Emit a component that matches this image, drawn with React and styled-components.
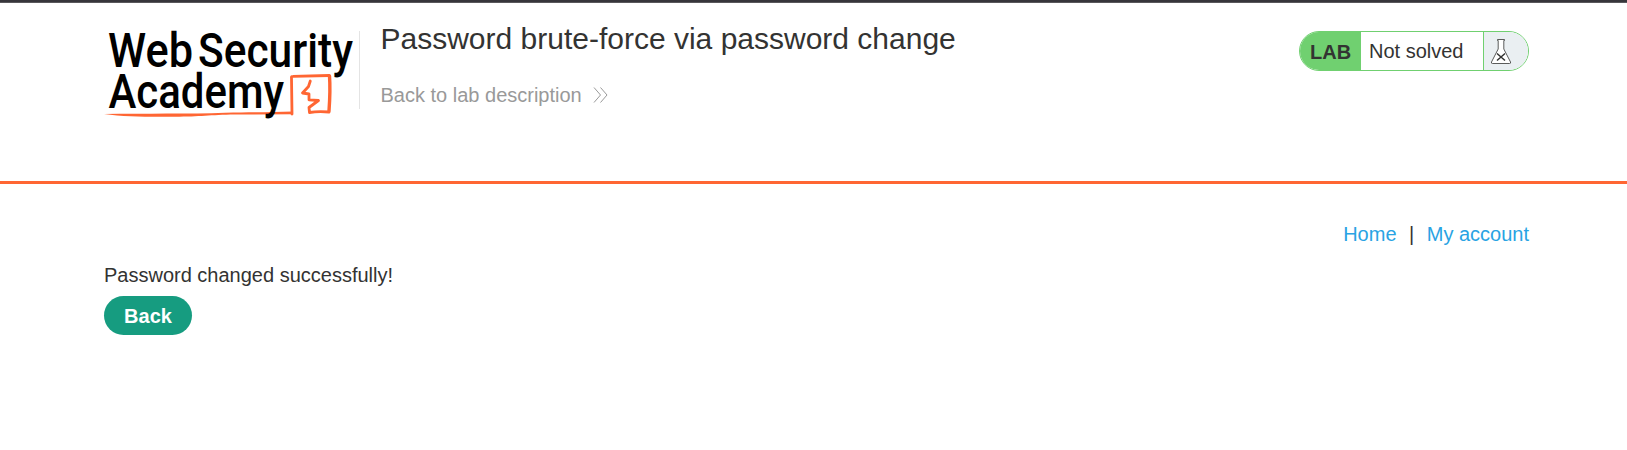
import React from "react";
import styled, { createGlobalStyle } from "styled-components";

const GlobalStyle = createGlobalStyle`
  *, *::before, *::after { box-sizing: border-box; }
  body {
    margin: 0;
    background: #fff;
    color: #333332;
    font-family: Arial, "Liberation Sans", sans-serif;
    font-size: 20px;
    line-height: 24px;
  }
`;

const TopEdge = styled.div`
  height: 3px;
  background: #37363b;
  border-bottom: 1px solid #59585c;
`;

const Header = styled.header`
  height: 181px;
  padding: 0 98px 0 104px;
  border-bottom: 3px solid #ff6633;
  display: flex;
  align-items: flex-start;
`;

const Logo = styled.svg`
  display: block;
  width: 255px;
  height: 92px;
  margin-top: 27px;
  flex: none;
  overflow: visible;
`;

const LogoText = styled.text`
  font-family: Roboto, sans-serif;
  font-size: 48.5px;
  font-weight: 500;
  fill: #000;
`;

const TitleBlock = styled.div`
  flex: 1;
  display: flex;
  flex-direction: column;
  align-items: flex-start;
  height: 78px;
  margin-top: 28px;
  padding-left: 20.5px;
  border-left: 1px solid #e4e4e4;
`;

const Title = styled.h1`
  margin: -10px 0 0;
  font-size: 30px;
  line-height: 36px;
  font-weight: 400;
`;

const DescriptionLink = styled.a`
  display: flex;
  align-items: center;
  gap: 11px;
  margin-top: 26px;
  color: #999;
  text-decoration: none;

  svg { display: block; }
`;

const LabStatus = styled.div`
  display: flex;
  width: 230px;
  height: 40px;
  margin-top: 28px;
  border: 1px solid #70d070;
  border-radius: 20px;
  overflow: hidden;
  line-height: 38px;
`;

const LabTag = styled.span`
  width: 61px;
  padding-left: 10px;
  padding-top: 1px;
  background: #70d070;
  font-weight: 700;
`;

const LabState = styled.span`
  width: 122px;
  padding-left: 8px;
`;

const LabIcon = styled.span`
  flex: 1;
  padding: 7px 0 0 7px;
  border-left: 1px solid #70d070;
  background: #eaeff2;

  svg { display: block; }
`;

const Main = styled.main`
  padding: 38px 98px 0 104px;
`;

const Nav = styled.nav`
  display: flex;
  justify-content: flex-end;
  gap: 12.5px;
`;

const NavLink = styled.a`
  color: #29a3e3;
  text-decoration: none;
`;

const Message = styled.p`
  margin: 17px 0 9px;
`;

const Button = styled.button`
  display: block;
  width: 88px;
  height: 39px;
  padding: 0;
  border: 0;
  border-radius: 20px;
  background: #169c80;
  color: #fff;
  font: 700 20px/40px Arial, "Liberation Sans", sans-serif;
`;

function AcademyLogo() {
  return (
    <Logo viewBox="104 30 255 92" role="img" aria-label="Web Security Academy">
      <g fill="none" stroke="#ff6633" strokeLinejoin="round" strokeLinecap="round">
        <path d="M292 114 L291.5 78 Q291 76.3 293 76.3 L329 75.5" strokeWidth="2.8" />
        <path d="M329.5 76 Q330.5 90 329 111" strokeWidth="3.4" />
        <path
          d="M329 112 Q318 111 309.5 112.5 L309 107.5 L318.5 100.5 L309 99.8 L309 94 L302.5 93 L308.5 86.5 L310.3 81"
          strokeWidth="2.8"
        />
      </g>
      <path
        fill="#ff6633"
        d="M104 114 C145 113.5 190 114 225 112.8 C250 112 270 112.5 293 111.5 V114.2 L235 114.6 C210 115 200 116.8 175 116.8 C150 117 125 117 104 114 Z"
      />
      <LogoText x="108" y="67" textLength="85" lengthAdjust="spacingAndGlyphs">Web</LogoText>
      <LogoText x="198" y="67" textLength="155" lengthAdjust="spacingAndGlyphs">Security</LogoText>
      <LogoText x="108.5" y="107.5" textLength="175.5" lengthAdjust="spacingAndGlyphs">Academy</LogoText>
    </Logo>
  );
}

function DoubleChevron() {
  return (
    <svg width="15" height="16" viewBox="0 0 15 16" fill="none" stroke="#999" strokeWidth="1">
      <path d="M1 .5 L7.5 8 L1 15.5 M7.5 .5 L14 8 L7.5 15.5" />
    </svg>
  );
}

function Flask() {
  return (
    <svg width="20" height="25" viewBox="0 0 20 25" fill="none" stroke="#333332">
      <path
        fill="#fff"
        strokeWidth="0.8"
        d="M6.5 .5 H13.5 V1.5 H12.8 V10 L19.5 23 Q20 24.5 18.5 24.5 H1.5 Q0 24.5 .5 23 L7.2 10 V1.5 H6.5 Z"
      />
      <path strokeWidth="1.5" d="M6 14.5 L14 21.5 M14 14.5 L6 21.5" />
    </svg>
  );
}

export default function App() {
  return (
    <>
      <GlobalStyle />
      <TopEdge />
      <Header>
        <AcademyLogo />
        <TitleBlock>
          <Title>Password brute-force via password change</Title>
          <DescriptionLink>
            Back to lab description
            <DoubleChevron />
          </DescriptionLink>
        </TitleBlock>
        <LabStatus>
          <LabTag>LAB</LabTag>
          <LabState>Not solved</LabState>
          <LabIcon>
            <Flask />
          </LabIcon>
        </LabStatus>
      </Header>
      <Main>
        <Nav>
          <NavLink>Home</NavLink>
          <span>|</span>
          <NavLink>My account</NavLink>
        </Nav>
        <Message>Password changed successfully!</Message>
        <Button type="button">Back</Button>
      </Main>
    </>
  );
}
